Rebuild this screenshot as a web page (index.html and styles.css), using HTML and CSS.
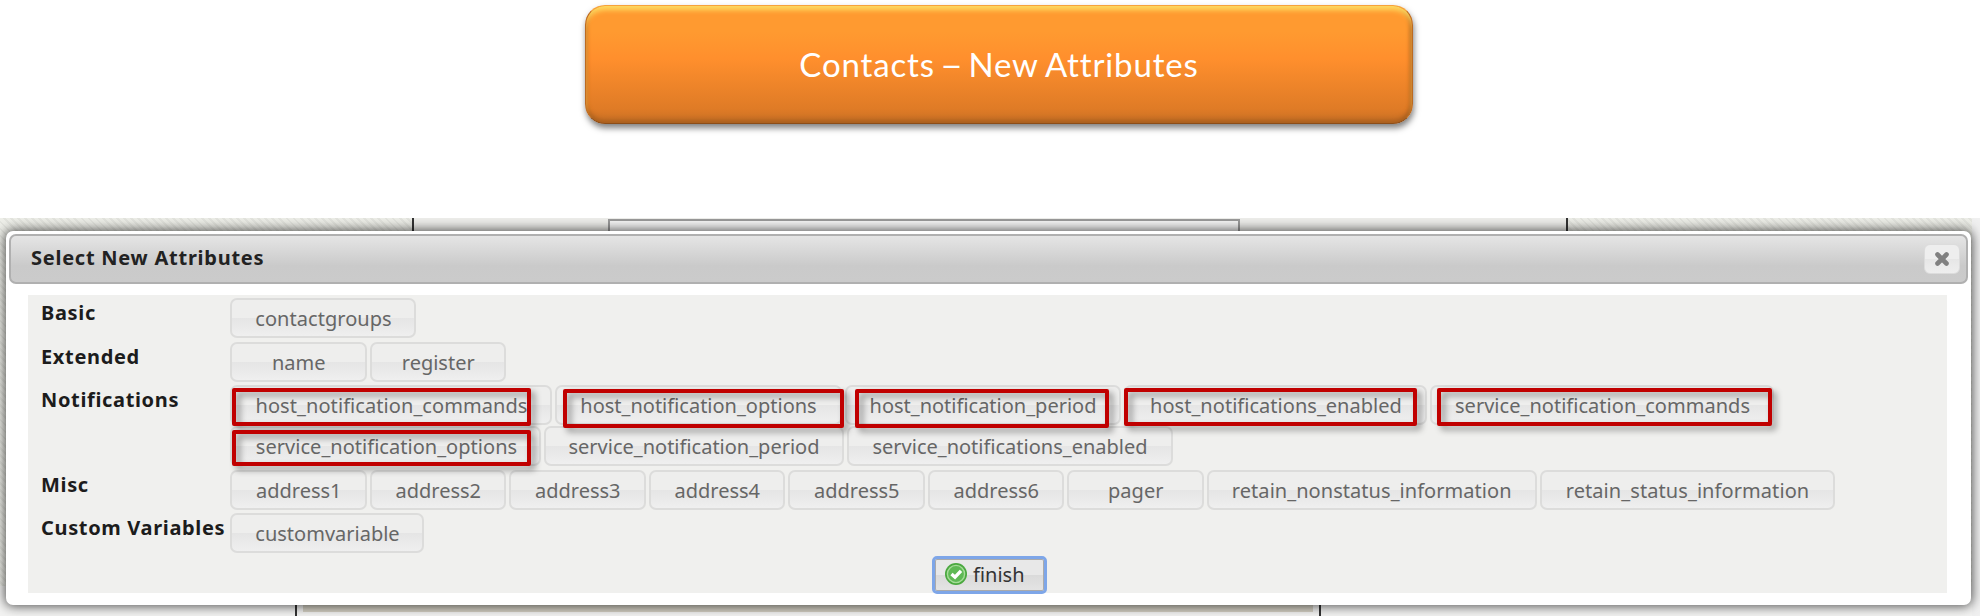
FILE: index.html
```html
<!DOCTYPE html>
<html lang="en">
<head>
<meta charset="utf-8">
<title>Contacts – New Attributes</title>
<link rel="stylesheet" href="styles.css">
</head>
<body>
<h1 class="banner"><span>Contacts <span class="dash">–</span> New Attributes</span></h1>
<main class="stage">
  <div class="backdrop">
    <div class="backdrop-top"><div class="backdrop-box"></div></div>
    <div class="backdrop-bottom"><div class="backdrop-strip"></div></div>
  </div>
  <section class="dialog">
    <header class="titlebar">
      <h2 class="title">Select New Attributes</h2>
      <button class="close" aria-label="Close"><svg width="16" height="16" viewBox="0 0 16 16"><path d="M3.5 3.5L12.5 12.5M12.5 3.5L3.5 12.5" stroke="#808080" stroke-width="4.6" stroke-linecap="round"/></svg></button>
    </header>
    <div class="content">
      <div class="row"><h3 class="label">Basic</h3>
        <div class="buttons"><button class="attr w-groups">contactgroups</button></div></div>
      <div class="row"><h3 class="label">Extended</h3>
        <div class="buttons"><button class="attr">name</button><button class="attr">register</button></div></div>
      <div class="row row-double"><h3 class="label">Notifications</h3>
        <div class="lines">
          <div class="buttons">
            <button class="attr w-hcommands">host_notification_commands<i class="mark m1"></i></button>
            <button class="attr w-hoptions">host_notification_options<i class="mark m2"></i></button>
            <button class="attr w-hperiod">host_notification_period<i class="mark m3"></i></button>
            <button class="attr w-henabled">host_notifications_enabled<i class="mark m4"></i></button>
            <button class="attr w-scommands">service_notification_commands<i class="mark m5"></i></button>
          </div>
          <div class="buttons">
            <button class="attr w-soptions">service_notification_options<i class="mark m6"></i></button>
            <button class="attr w-speriod">service_notification_period</button>
            <button class="attr w-senabled">service_notifications_enabled</button>
          </div>
        </div></div>
      <div class="row"><h3 class="label">Misc</h3>
        <div class="buttons">
          <button class="attr">address1</button><button class="attr">address2</button><button class="attr">address3</button><button class="attr">address4</button><button class="attr">address5</button><button class="attr">address6</button><button class="attr">pager</button><button class="attr w-nonstatus">retain_nonstatus_information</button><button class="attr w-status">retain_status_information</button>
        </div></div>
      <div class="row"><h3 class="label">Custom Variables</h3>
        <div class="buttons"><button class="attr w-custom">customvariable</button></div></div>
      <div class="actions">
        <button class="finish">
          <svg width="24" height="24" viewBox="0 0 24 24"><circle cx="12" cy="12" r="11" fill="#4aa83f"/><circle cx="12" cy="12" r="8.6" fill="#5fb955" stroke="#a5dc98" stroke-width="1.4"/><path d="M7.5 12L11 15.2L17 8.8" fill="none" stroke="#fff" stroke-width="3.4"/></svg>
          <span>finish</span>
        </button>
      </div>
    </div>
  </section>
</main>
</body>
</html>
```
FILE: styles.css
```css
* { box-sizing: border-box; }
body { margin: 0; width: 1980px; height: 616px; overflow: hidden; background: #fff; font-family: "Noto Sans", "Open Sans", sans-serif; }
h1, h2, h3 { margin: 0; }
button { font: inherit; padding: 0; }

.banner {
  width: 828px; height: 119px; margin: 5px 0 94px 585px; padding-bottom: 2px;
  display: flex; align-items: center; justify-content: center;
  border-radius: 20px; border: 1px solid #bd6a20;
  border-top-color: #f7a23b; border-bottom-color: #8c4d18;
  background: linear-gradient(#ff9a30 0, #ff9a30 22%, #ff8f2d 45%, #df7b26 88%, #c86f25);
  box-shadow: inset 0 5px 5px -1px #ffdc62, inset 0 -5px 5px -2px #a9601f, inset -3px 0 4px -1px #ad5c1b, inset 3px 0 4px -2px #c8681c, 1px 4px 6px rgba(0,0,0,.5);
  color: #fff; font: 400 33px Lato, sans-serif; letter-spacing: .85px; word-spacing: -1.5px; font-variant-ligatures: none;
}
.dash { display: inline-block; width: 18px; transform: translateX(-3px) scaleX(1.2); transform-origin: left; }

.stage { position: relative; height: 398px; padding: 13px 9px 0 6px; background: #f0f0f0; overflow: hidden; }
.backdrop {
  position: absolute; inset: 0 8px 0 0; display: flex; flex-direction: column; justify-content: space-between;
  background: repeating-linear-gradient(45deg, #eeefe9 0 3px, #e4e5df 3px 5px);
}
.backdrop-top { margin-left: 412px; width: 1156px; height: 30px; padding: 1px 0 0 194px; background: #eeeeeb; border: solid #333; border-width: 0 2px; }
.backdrop-box { width: 632px; height: 29px; border: 2px solid #999; background: #f5f5f5; }
.backdrop-bottom { width: 100%; height: 30px; background: #f3f3f2; padding-left: 295px; }
.backdrop-strip { width: 1026px; height: 30px; padding: 0 6px; border: solid #333; border-width: 0 2px; background: linear-gradient(#d5d1c5 0 26px, #f3f3f2 26px) content-box; }

.dialog { position: relative; height: 374px; padding: 3px; border-radius: 7px; background: #fff; box-shadow: 0 0 12px 1px rgba(0,0,0,.7); }
.titlebar {
  display: flex; align-items: center; justify-content: space-between; height: 50px; padding: 0 6px 0 20px;
  border: 2px solid #b0b0b0; border-radius: 7px; background: linear-gradient(#e5e5e5, #cacaca 65%, #cbcbcb);
}
.title { font-size: 20px; line-height: 28px; letter-spacing: .75px; color: #222; padding-bottom: 2px; }
.close { width: 36px; height: 30px; display: flex; align-items: center; justify-content: center; border: 1px solid #dcdcdc; border-radius: 6px; background: linear-gradient(#eee 50%, #e6e6e6 50%, #eee); }

.content { margin: 11px 21px 0 19px; height: 298px; padding-top: 3px; background: #f0f0ee; }
.row { display: flex; height: 43.7px; }
.row-double { height: 84.4px; }
.label { width: 202px; padding-left: 13px; font-size: 20px; line-height: 22px; padding-top: 4px; letter-spacing: .65px; color: #1c1c1c; white-space: nowrap; }
.buttons { display: flex; gap: 3px; height: 41px; }
.attr {
  position: relative; width: 136.5px; height: 40px; flex: none; padding: 2px 0 0 1px;
  border: 2px solid #dcdcdb; border-radius: 7px; background: linear-gradient(#eeeeed 50%, #e5e5e5 50%, #efefef);
  color: #666; font-size: 20px; line-height: 26px; white-space: nowrap; display: flex; align-items: center; justify-content: center;
}
.w-groups { width: 186px; letter-spacing: .05px; }
.w-hcommands { width: 322px; letter-spacing: .07px; }
.w-hoptions { width: 287px; padding-left: 0; }
.w-hperiod { width: 276px; padding-left: 0; }
.w-henabled { width: 303px; letter-spacing: .03px; }
.w-scommands { width: 344px; letter-spacing: .03px; }
.w-soptions { width: 311px; padding-left: 2px; letter-spacing: .03px; }
.w-speriod { width: 300px; padding-left: 0; }
.w-senabled { width: 326px; padding-left: 0; }
.w-nonstatus { width: 330.5px; padding-left: 0; letter-spacing: .05px; }
.w-status { width: 295px; padding-left: 0; letter-spacing: .08px; }
.w-custom { width: 194px; }

.mark { position: absolute; z-index: 1; height: 38px; border: 4px solid #c00000; border-radius: 2px; filter: drop-shadow(4px 4px 3px rgba(0,0,0,.4)); }
.m1 { left: 0; top: 1px; width: 299px; }
.m2 { left: 6px; top: 2px; width: 281px; height: 39px; }
.m3 { left: 8px; top: 2px; width: 254px; height: 39px; }
.m4 { left: -2px; top: 1px; width: 293px; }
.m5 { left: 5px; top: 1px; width: 335px; }
.m6 { left: 0; top: 2px; width: 299px; height: 36px; }

.actions { display: flex; padding-left: 904px; margin-top: -1.5px; }
.finish {
  width: 115px; height: 38px; display: flex; align-items: center; gap: 5px; padding: 0 0 1px 9px;
  border: 3px solid #7ea6e8; border-radius: 5px; background: linear-gradient(#e8e8e8 50%, #dadada 50%, #e4e4e4);
  box-shadow: inset 0 0 0 1px #aaa; font-size: 20px; color: #333;
}
```
